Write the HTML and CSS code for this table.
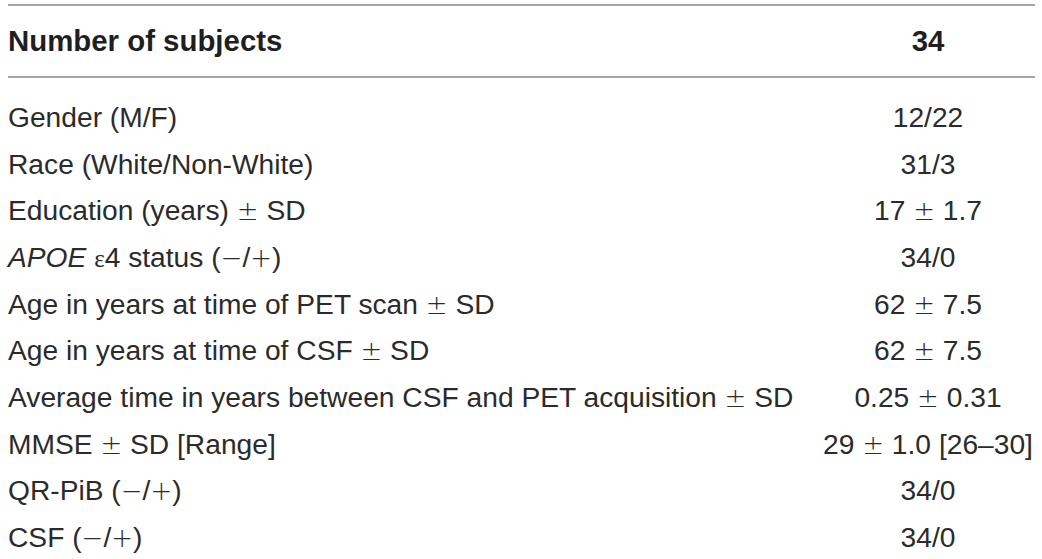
FILE: index.html
```html
<!DOCTYPE html>
<html lang="en">
<head>
<meta charset="utf-8">
<title>Subject characteristics</title>
<link rel="stylesheet" href="styles.css">
</head>
<body>
<div class="tbl">
  <div class="row head">
    <div class="lbl">Number of subjects</div>
    <div class="val">34</div>
  </div>
  <div class="tbody">
    <div class="row"><div class="lbl">Gender (M/F)</div><div class="val">12/22</div></div>
    <div class="row"><div class="lbl">Race (White/Non-White)</div><div class="val">31/3</div></div>
    <div class="row"><div class="lbl">Education (years) <span class="op">±</span> SD</div><div class="val">17 <span class="op">±</span> 1.7</div></div>
    <div class="row"><div class="lbl"><i>APOE</i> <span class="eps">ε</span>4 status (<span class="op">−</span>/<span class="op">+</span>)</div><div class="val">34/0</div></div>
    <div class="row"><div class="lbl">Age in years at time of PET scan <span class="op">±</span> SD</div><div class="val">62 <span class="op">±</span> 7.5</div></div>
    <div class="row"><div class="lbl">Age in years at time of CSF <span class="op">±</span> SD</div><div class="val">62 <span class="op">±</span> 7.5</div></div>
    <div class="row"><div class="lbl">Average time in years between CSF and PET acquisition <span class="op">±</span> SD</div><div class="val">0.25 <span class="op">±</span> 0.31</div></div>
    <div class="row"><div class="lbl">MMSE <span class="op">±</span> SD [Range]</div><div class="val">29 <span class="op">±</span> 1.0 [26–30]</div></div>
    <div class="row"><div class="lbl">QR-PiB (<span class="op">−</span>/<span class="op">+</span>)</div><div class="val">34/0</div></div>
    <div class="row"><div class="lbl">CSF (<span class="op">−</span>/<span class="op">+</span>)</div><div class="val">34/0</div></div>
  </div>
</div>
</body>
</html>
```
FILE: styles.css
```css
html, body {
  margin: 0;
  padding: 0;
  background: #ffffff;
}
body {
  font-family: "Liberation Sans", Arial, sans-serif;
  font-size: 28.2px;
  color: #2b2b2b;
}
.tbl {
  margin: 4px 7px 0 8px;
  border-top: 2px solid #a8a8a8;
}
.row {
  display: grid;
  grid-template-columns: 1fr 214px;
  align-items: center;
  height: 46.7px;
  white-space: nowrap;
}
.head {
  height: 70px;
  border-bottom: 2px solid #a8a8a8;
  font-weight: bold;
  font-size: 29.4px;
  color: #1f1f1f;
}
.tbody {
  padding-top: 16px;
}
.val {
  text-align: center;
}
.eps {
  font-family: "Liberation Serif", "Times New Roman", serif;
  font-size: 25px;
}
.op {
  font-family: "DejaVu Sans", sans-serif;
  font-weight: 200;
  font-size: 26px;
}
```
